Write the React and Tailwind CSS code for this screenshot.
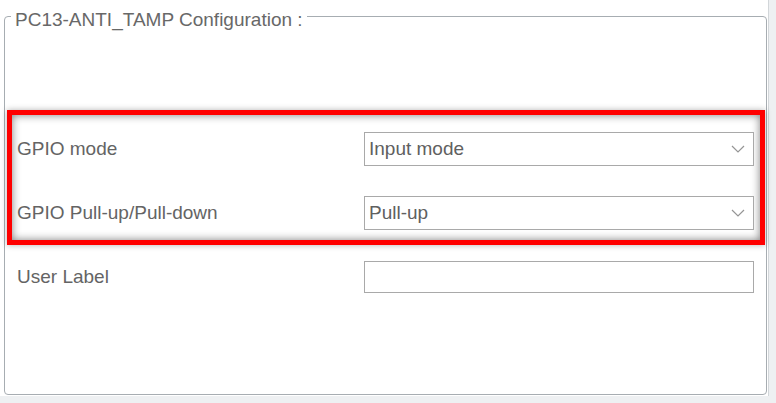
import React from "react";

// dropdown chevron, thin grey stroke
const Chevron = () => (
    <svg width="14" height="8" viewBox="0 0 14 8" fill="none" className="shrink-0">
        <path d="M1 1l6 6 6-6" stroke="#959595" strokeWidth="1.2" />
    </svg>
);

const SelectBox = ({ value }) => (
    <div className="h-[34px] flex items-center justify-between border border-[#a9a9a9] bg-white pl-[4px] pr-[8px]">
        <span className="text-[#606060]">{value}</span>
        <Chevron />
    </div>
);

const Row = ({ label, children }) => (
    <div className="grid grid-cols-[347px_1fr] items-center">
        <span className="text-[#646464]">{label}</span>
        {children}
    </div>
);

const App = () => {
    return (
        <div className="w-[776px] h-[403px] bg-white flex flex-col overflow-hidden font-['Liberation_Sans',Arial,sans-serif] text-[19px] leading-[22px]">
            <div className="flex flex-1">
                <div className="flex-1 pl-[4px] pt-[16px] pr-[1px] pb-[1px]">
                    <div className="relative h-full border border-[#a7adb2] rounded-[4px] pt-[93px] pl-[12px] pr-[12px]">
                        {/* legend sits on the top border */}
                        <span className="absolute left-[6px] top-[-8px] bg-white px-[4px] text-[#686868]">
                            PC13-ANTI_TAMP Configuration :
                        </span>

                        {/* highlighted rows */}
                        <div className="-ml-[10px] -mr-[11px] border-[5px] border-[#ff0000] pl-[5px] pr-[6px] pt-[17px] pb-[10px] flex flex-col gap-[30px] shadow-[0_0_6px_rgba(0,0,0,0.3),inset_0_0_9px_rgba(0,0,0,0.5)]">
                            <Row label="GPIO mode">
                                <SelectBox value="Input mode" />
                            </Row>
                            <Row label="GPIO Pull-up/Pull-down">
                                <SelectBox value="Pull-up" />
                            </Row>
                        </div>

                        <div className="mt-[16px]">
                            <Row label="User Label">
                                <div className="h-[32px] border border-[#a9a9a9] bg-white" />
                            </Row>
                        </div>
                    </div>
                </div>
                <div className="w-[8px] bg-[#eef0f2] border-l border-[#d2d6d9]" />
            </div>
            <div className="h-[7px] bg-[#eef0f2]" />
        </div>
    );
};

export default App;
